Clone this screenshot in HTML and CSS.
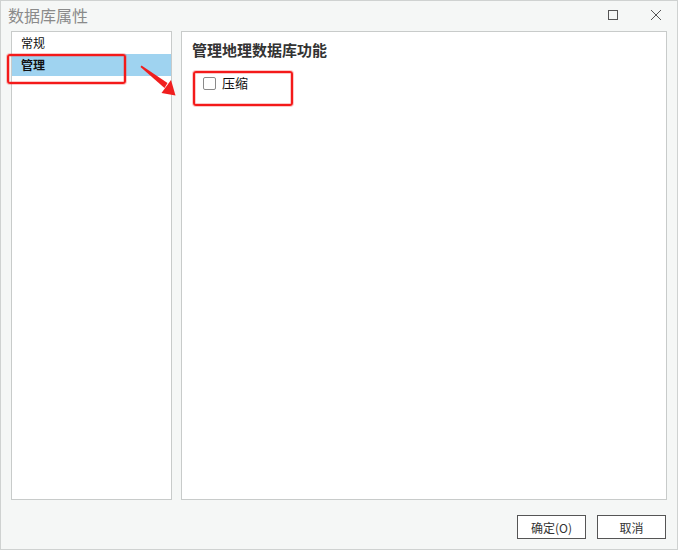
FILE: index.html
```html
<!DOCTYPE html>
<html lang="zh-CN">
<head>
<meta charset="utf-8">
<title>数据库属性</title>
<link rel="stylesheet" href="styles.css">
</head>
<body>
<div class="window">
  <div class="titlebar">
    <div class="title">数据库属性</div>
    <div class="controls">
      <svg class="ctl" width="12" height="12" viewBox="0 0 12 12"><rect x="1.5" y="1.5" width="9" height="9" fill="none" stroke="#555" stroke-width="1"/></svg>
      <svg class="ctl" width="12" height="12" viewBox="0 0 12 12"><path d="M1 1 L11 11 M11 1 L1 11" stroke="#555" stroke-width="1" fill="none"/></svg>
    </div>
  </div>
  <div class="content">
    <div class="nav">
      <div class="nav-item">常规</div>
      <div class="nav-item selected">管理</div>
    </div>
    <div class="panel">
      <div class="heading">管理地理数据库功能</div>
      <label class="check">
        <span class="box"></span>
        <span class="label">压缩</span>
      </label>
    </div>
  </div>
  <div class="footer">
    <button class="btn">确定(O)</button>
    <button class="btn">取消</button>
  </div>
  <div class="mark mark-nav"></div>
  <div class="mark mark-check"></div>
  <svg class="arrow" width="678" height="550" viewBox="0 0 678 550">
    <polygon points="141.5,65.5 167.5,83 164.5,88 140.5,67" fill="#f01e1e"/>
    <polygon points="171,80 161.5,93 175.5,95.5" fill="#f01e1e"/>
  </svg>
</div>
</body>
</html>
```
FILE: styles.css
```css
html, body {
  margin: 0;
  padding: 0;
  background: #f5f7f6;
}
body {
  font-family: "Noto Sans CJK SC", "Noto Sans", sans-serif;
}
.window {
  position: relative;
  width: 678px;
  height: 550px;
  box-sizing: border-box;
  border: 1px solid #cfd2d1;
  background: #f5f7f6;
  display: flex;
  flex-direction: column;
}
.titlebar {
  height: 30px;
  display: flex;
  align-items: center;
  justify-content: space-between;
}
.title {
  font-size: 16px;
  color: #8a8a8a;
  padding-left: 7px;
  line-height: 30px;
  margin-top: -3px;
}
.controls {
  display: flex;
  gap: 31px;
  padding-right: 15px;
  margin-top: -2px;
}
.ctl { display: block; }
.content {
  display: flex;
  gap: 9px;
  padding-left: 10px;
  height: 469px;
}
.nav {
  width: 161px;
  box-sizing: border-box;
  border: 1px solid #c8cbca;
  background: #fff;
}
.nav-item {
  height: 22px;
  line-height: 21px;
  font-size: 12px;
  color: #111;
  padding-left: 9px;
}
.nav-item.selected {
  background: #9fd3f0;
  font-weight: bold;
}
.panel {
  width: 486px;
  box-sizing: border-box;
  border: 1px solid #c8cbca;
  background: #fff;
  padding: 8px 10px;
}
.heading {
  font-size: 15px;
  font-weight: bold;
  color: #333;
  line-height: 20px;
}
.check {
  display: flex;
  align-items: center;
  margin-top: 15px;
  margin-left: 11px;
  gap: 6px;
}
.box {
  width: 11px;
  height: 11px;
  border: 1px solid #8a8a8a;
  border-radius: 2px;
  background: #fff;
}
.label {
  font-size: 13px;
  color: #111;
  line-height: 16px;
}
.footer {
  display: flex;
  justify-content: flex-end;
  gap: 11px;
  padding-right: 11px;
  padding-top: 15px;
}
.btn {
  width: 69px;
  height: 24px;
  box-sizing: border-box;
  border: 1px solid #555;
  background: #fff;
  font-family: "Noto Sans CJK SC", sans-serif;
  font-size: 12px;
  color: #333;
  padding: 0;
  border-radius: 0;
}
.mark {
  position: absolute;
  border: 2px solid #f41a1a;
  border-radius: 3px;
  box-sizing: border-box;
  box-shadow: 0 0 0 1px rgba(240, 40, 40, 0.25), inset 0 0 0 1px rgba(240, 40, 40, 0.25);
}
.mark-nav {
  left: 6px;
  top: 53px;
  width: 119px;
  height: 30px;
}
.mark-check {
  left: 192px;
  top: 70px;
  width: 100px;
  height: 35px;
}
.arrow {
  position: absolute;
  left: -1px;
  top: -1px;
  pointer-events: none;
}
```
